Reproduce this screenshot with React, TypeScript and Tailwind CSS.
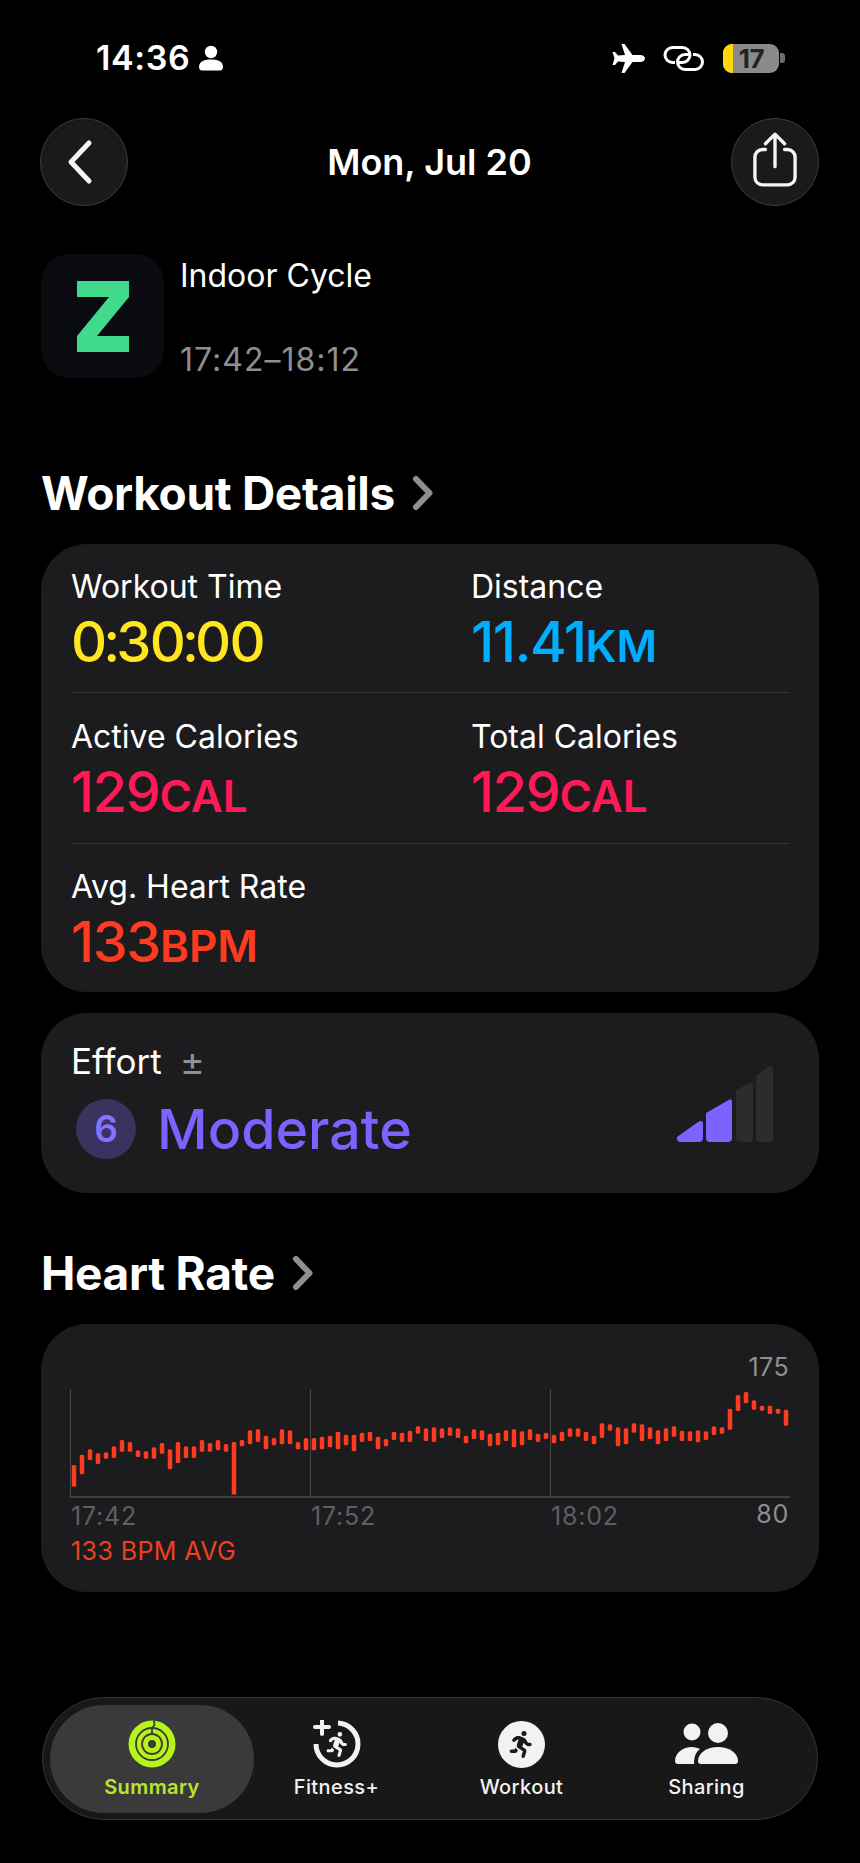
import { FaPersonRunning } from "react-icons/fa6";

const bars: [number, number][] = [
  [375,440],[344,403],[328,360],[340,372],[337,356],[319,354],[300,335],[306,335],[331,351],[334,356],
  [322,356],[309,341],[328,388],[306,369],[319,354],[319,354],[300,335],[309,335],[300,331],[312,335],
  [306,464],[300,319],[271,313],[268,306],[287,328],[294,316],[268,313],[271,313],[306,328],[294,331],
  [294,331],[290,328],[287,322],[275,328],[284,316],[284,334],[278,306],[275,303],[290,328],[297,319],
  [275,300],[278,306],[272,306],[259,281],[265,303],[262,306],[265,294],[262,287],[265,294],
  [287,310],[268,297],[271,300],[281,319],[278,316],[271,303],[268,322],[274,316],[268,300],[281,306],
  [278,297],[284,310],[275,303],[265,290],[265,290],[275,303],[287,313],[250,294],[253,272],[262,319],
  [265,313],[250,278],[253,303],[262,297],[271,313],[265,303],[259,290],[272,303],[274,303],[271,307],
  [274,300],[259,285],[262,281],[206,269],[165,213],[156,190],[181,209],[197,212],[197,222],[206,221],[209,257],
];

const font = { fontFamily: "Inter, 'Noto Sans', sans-serif" };

function Chevron() {
  return (
    <svg width="24" height="36" viewBox="0 0 24 36" fill="none">
      <path d="M5 4 L18.5 18 L5 32" stroke="#8e8e93" strokeWidth="6" strokeLinecap="round" strokeLinejoin="round" />
    </svg>
  );
}

function Stat({ label, value, unit, color, className = "" }: { label: string; value: React.ReactNode; unit?: string; color: string; className?: string }) {
  return (
    <div className={className}>
      <div className="text-[32px] leading-[40px] text-white">{label}</div>
      <div className={`flex items-baseline mt-[4px] font-medium ${color}`}>
        <span className="text-[56px] leading-[62px] tracking-[-1.5px]">{value}</span>
        {unit && <span className="text-[44px] leading-[62px] font-semibold">{unit}</span>}
      </div>
    </div>
  );
}

function Tab({ label, children, active = false }: { label: string; children: React.ReactNode; active?: boolean }) {
  return (
    <div className={`flex flex-col items-center justify-center h-[108px] pt-[3px] rounded-full ${active ? "bg-[#3a3a3a] text-[#b8e62e] font-semibold w-[204px] -mr-[10px]" : "text-[#f2f2f2] font-medium w-[185px]"}`}>
      <div className="h-[48px] flex items-center justify-center">{children}</div>
      <div className="text-[20px] leading-[26px] mt-[6px] tracking-[0.4px]">{label}</div>
    </div>
  );
}

export default function App() {
  return (
    <div style={font} className="w-[860px] h-[1863px] bg-black text-white overflow-hidden flex flex-col px-[41px]">
      {/* status bar */}
      <div className="flex items-center justify-between h-[116px] pl-[55px] pr-[34px]">
        <div className="flex items-center gap-[9px]">
          <span className="text-[34px] font-semibold leading-[40px] tracking-[0.6px]">14:36</span>
          <svg width="24" height="26" viewBox="0 0 24 26" fill="white">
            <circle cx="12" cy="7" r="6.2" />
            <path d="M0 22 C0 16 6 14.5 12 14.5 C18 14.5 24 16 24 22 C24 24.5 22.5 25.5 21 25.5 H3 C1.5 25.5 0 24.5 0 22 Z" />
          </svg>
        </div>
        <div className="flex items-center">
          <svg width="33" height="29" viewBox="0 0 33 29" fill="white">
            <path d="M9.5 0 L12.5 0 L20.5 11 L28 11 C31 11 33 12.8 33 14.5 C33 16.2 31 18 28 18 L20.5 18 L12.5 29 L9.5 29 L13 18 L6 17.5 L3 21 L0.5 21 L2.5 14.5 L0.5 8 L3 8 L6 11.5 L13 11 Z" />
          </svg>
          <svg className="ml-[18px]" width="42" height="25" viewBox="0 0 42 25" fill="none" stroke="white" strokeWidth="3">
            <path d="M12 16.5 H9.5 A7.5 7.5 0 0 1 9.5 1.5 H19.5 A7.5 7.5 0 0 1 27 9" />
            <path d="M30 8.5 H32 A7.5 7.5 0 0 1 32 23.5 H22 A7.5 7.5 0 0 1 14.5 16" />
            <path d="M14.5 16 A7.5 7.5 0 0 1 22 8.5 H26" />
            <path d="M27 9 A7.5 7.5 0 0 1 19.5 16.5 H16" />
          </svg>
          <div className="ml-[18px] flex items-center">
            <div className="w-[56px] h-[29px] rounded-[9px] flex items-center bg-[#8a8a8a]">
              <div className="w-[10px] h-[29px] rounded-l-[9px] bg-[#ffd60a]" />
              <div className="flex-1 text-[#232323] text-[26px] font-bold leading-[29px] pr-[9px] text-center tracking-[-0.5px]">17</div>
            </div>
            <div className="w-[5px] h-[10px] ml-[1px] rounded-r-[3px] bg-[#6e6e6e]" />
          </div>
        </div>
      </div>

      {/* nav */}
      <div className="flex items-center justify-between h-[90px] mt-[1px] -ml-[1px]">
        <div className="w-[88px] h-[88px] rounded-full bg-[#1a1a1a] border border-[#3c3c3c] flex items-center justify-center">
          <svg width="32" height="48" viewBox="0 0 32 48" fill="none" className="-ml-[8px]">
            <path d="M25 5 L7 24 L25 43" stroke="#f5f5f5" strokeWidth="5" strokeLinecap="round" strokeLinejoin="round" />
          </svg>
        </div>
        <div className="text-[36px] font-semibold leading-[44px]">Mon, Jul 20</div>
        <div className="w-[88px] h-[88px] rounded-full bg-[#1a1a1a] border border-[#3c3c3c] flex items-center justify-center">
          <svg width="44" height="56" viewBox="0 0 46 58" fill="none" stroke="#f5f5f5" strokeWidth="3.5" strokeLinecap="round" strokeLinejoin="round" className="-mt-[4px]">
            <path d="M13 18 H10 A8 8 0 0 0 2 26 V47 A8 8 0 0 0 10 55 H36 A8 8 0 0 0 44 47 V26 A8 8 0 0 0 36 18 H33" />
            <path d="M23 36 V3 M13 12 L23 2 L33 12" />
          </svg>
        </div>
      </div>

      {/* app row */}
      <div className="flex mt-[47px] h-[125px]">
        <div className="w-[123px] h-[124px] rounded-[28px] bg-[#0a0b10] flex items-center justify-center">
          <svg width="52" height="71" viewBox="0 0 52 71" fill="#41d98a">
            <path d="M0 0 H52 V16 L20 55 H52 V71 H0 V55 L32 16 H0 Z" />
          </svg>
        </div>
        <div className="ml-[16px]">
          <div className="text-[32px] leading-[40px] mt-[2px]">Indoor Cycle</div>
          <div className="text-[32px] leading-[40px] mt-[44px] text-[#8e8e93] tracking-[1px]">17:42–18:12</div>
        </div>
      </div>

      {/* workout details */}
      <div className="flex items-center gap-[16px] mt-[89px] h-[50px]">
        <h2 className="text-[46px] font-bold leading-[50px] tracking-[-0.3px]">Workout Details</h2>
        <Chevron />
      </div>
      <div className="mt-[26px] h-[448px] rounded-[46px] bg-[#1c1c1e] px-[30px] pt-[23px]">
        <div className="grid grid-cols-[400px_1fr] h-[126px]">
          <Stat
            label="Workout Time"
            value={<>0<span className="-mx-[2.5px]">:</span>30<span className="-mx-[2.5px]">:</span>00</>}
            color="text-[#ffe620]"
          />
          <Stat label="Distance" value="11.41" unit="KM" color="text-[#00aeff]" />
        </div>
        <div className="h-px bg-[#333336] -mt-[1px]" />
        <div className="grid grid-cols-[400px_1fr] h-[150px] pt-[24px]">
          <Stat label="Active Calories" value="129" unit="CAL" color="text-[#ff1a55]" />
          <Stat label="Total Calories" value="129" unit="CAL" color="text-[#ff1a55]" />
        </div>
        <div className="h-px bg-[#333336]" />
        <Stat className="pt-[23px]" label="Avg. Heart Rate" value="133" unit="BPM" color="text-[#ff3b1f]" />
      </div>

      {/* effort */}
      <div className="mt-[21px] h-[180px] rounded-[46px] bg-[#1c1c1e] px-[30px] pt-[28px] flex justify-between">
        <div>
          <div className="flex items-center text-[35px] leading-[40px]">
            Effort
            <span className="ml-[18px] text-[#8e8e93] text-[38px] leading-[40px]">±</span>
          </div>
          <div className="flex items-center mt-[18px] ml-[5px]">
            <div className="w-[60px] h-[60px] rounded-full bg-[#3a3360] text-[#8572ff] font-semibold text-[37px] flex items-center justify-center">6</div>
            <div className="ml-[21px] text-[55.5px] leading-[60px] font-medium text-[#7a63ff]">Moderate</div>
          </div>
        </div>
        <svg className="mt-[25px] mr-[16px]" width="96" height="76" viewBox="0 0 96 76">
          <path d="M0 71 L0 73 Q0 76 4 76 H22 Q26 76 26 72 V58 Q26 53 21 56 Z" fill="#7a63ff" />
          <path d="M29 47 V72 Q29 76 33 76 H51 Q55 76 55 72 V36 Q55 31 50 35 Z" fill="#7a63ff" />
          <path d="M59 24 V72 Q59 76 63 76 H72 Q76 76 76 72 V20 Q76 15 71 18 Z" fill="#2c2c2e" />
          <path d="M79 10 V72 Q79 76 83 76 H92 Q96 76 96 72 V4 Q96 -1 91 1 Z" fill="#2c2c2e" />
        </svg>
      </div>

      {/* heart rate */}
      <div className="flex items-center gap-[16px] mt-[55px] h-[50px]">
        <h2 className="text-[46px] font-bold leading-[50px] tracking-[-0.3px]">Heart Rate</h2>
        <Chevron />
      </div>
      <div className="mt-[26px] h-[268px] rounded-[46px] bg-[#1c1c1e] pl-[29px] pr-[30px] pt-[27px]">
        <div className="text-[25px] leading-[32px] text-right text-[#8e8e93] tracking-[0.4px]">175</div>
        <svg className="block mt-[6px]" width="722" height="110" viewBox="70 1389 722 110">
          <path d="M70.5 1389 V1497 M310.5 1389 V1497 M550.5 1389 V1497" stroke="#4a4a4d" strokeWidth="1" fill="none" />
          <path d="M70 1497 H790" stroke="#4a4a4d" strokeWidth="1.5" fill="none" />
          {bars.map(([t, b], i) => (
            <rect key={i} x={71.75 + i * 8} y={1340 + t / 3} width="4.5" height={(b - t) / 3} rx="1.5" fill="#ff3b1f" />
          ))}
        </svg>
        <div className="grid grid-cols-[240px_240px_1fr] text-[25px] leading-[32px] text-[#5f5f63] mt-[1px] pl-[1px] tracking-[0.8px]">
          <div>17:42</div>
          <div>17:52</div>
          <div className="flex justify-between">
            <span>18:02</span>
            <span className="text-[#8e8e93] -mt-[2px]">80</span>
          </div>
        </div>
        <div className="text-[25px] leading-[32px] text-[#f0401f] mt-[3px] pl-[1px] tracking-[0.4px]">133 BPM AVG</div>
      </div>

      {/* tab bar */}
      <div className="mt-[105px] h-[123px] w-[776px] ml-[1px] rounded-full bg-[#181818] border-[1.5px] border-[#343434] flex items-center pl-[7px]">
        <Tab label="Summary" active>
          <svg width="48" height="48" viewBox="0 0 48 48">
            <circle cx="24" cy="24" r="23.5" fill="#b7f31b" />
            <circle cx="24" cy="24" r="16" fill="none" stroke="#3a3a3a" strokeWidth="1.8" />
            <circle cx="24" cy="24" r="10" fill="none" stroke="#3a3a3a" strokeWidth="1.8" />
            <circle cx="24" cy="24" r="4" fill="#3a3a3a" />
            <path d="M26 0.5 L26.5 5 L24 8 L24 14" stroke="#3a3a3a" strokeWidth="1.8" fill="none" />
          </svg>
        </Tab>
        <Tab label="Fitness+">
          <div className="relative w-[48px] h-[48px]">
            <svg width="48" height="48" viewBox="0 0 48 48" fill="none" stroke="#f2f2f2" strokeLinecap="round">
              <path d="M25 3 A21 21 0 1 1 3 24" strokeWidth="5" strokeLinecap="butt" />
              <path d="M9 0 V14 M2 7 H16" strokeWidth="4" />
            </svg>
            <FaPersonRunning className="absolute left-[12px] top-[12px] text-[#f2f2f2]" size={25} />
          </div>
        </Tab>
        <Tab label="Workout">
          <div className="w-[47px] h-[47px] rounded-full bg-[#f2f2f2] flex items-center justify-center">
            <FaPersonRunning className="text-[#181818]" size={27} />
          </div>
        </Tab>
        <Tab label="Sharing">
          <svg width="63" height="42" viewBox="0 0 63 42" fill="#f2f2f2">
            <circle cx="17" cy="9" r="8.5" />
            <circle cx="43" cy="10" r="10" />
            <path d="M0 38 C0 30 8 24 17 24 C20 24 23 25 25 26 C21 29 19 33 19 41 H3 C1 41 0 40 0 38 Z" />
            <path d="M23 38 C23 30 32 24 43 24 C54 24 63 30 63 38 C63 40 62 41 60 41 H26 C24 41 23 40 23 38 Z" />
          </svg>
        </Tab>
      </div>
    </div>
  );
}
